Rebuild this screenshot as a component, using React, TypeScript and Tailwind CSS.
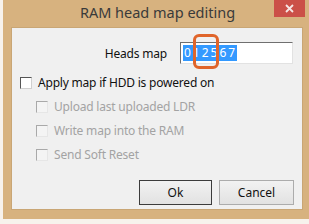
import React from "react";

const font = { fontFamily: '"Noto Sans", "Liberation Sans", sans-serif' };

function Check({ disabled, label }: { disabled?: boolean; label: string }) {
  return (
    <div className="flex items-center h-[12px]">
      <div
        className={
          disabled
            ? "w-[12px] h-[12px] border-t border-l border-[#a9a9a9] border-b border-r border-b-[#e6e6e6] border-r-[#e6e6e6] bg-[#f4f4f4]"
            : "w-[12px] h-[12px] border-t border-l border-[#555555] border-b border-r border-b-[#d0d0d0] border-r-[#d0d0d0] bg-white"
        }
      />
      <span
        className={
          "ml-[6px] text-[12px] tracking-[-0.2px] leading-none " +
          (disabled ? "text-[#a3a3a3]" : "text-[#111111]")
        }
      >
        {label}
      </span>
    </div>
  );
}

export default function App() {
  return (
    <div className="w-[309px] h-[224px] bg-[#f7f2ec] overflow-hidden relative" style={font}>
      <div className="ml-[3px] w-[309px] h-[219px] bg-[#d7b27f] flex flex-col">
        <div className="h-[27px] relative flex items-center justify-center">
          <span className="text-[14.5px] text-[#3a3a3a] leading-none -mt-[3px]">RAM head map editing</span>
          <div className="absolute left-[271px] top-0 w-[31px] h-[17px] bg-[#cb5048] flex items-center justify-center">
            <svg width="9" height="9" viewBox="0 0 9 9">
              <path d="M1 1L8 8M8 1L1 8" stroke="#f6e6e4" strokeWidth="1.8" />
            </svg>
          </div>
        </div>
        <div className="ml-[8px] w-[292px] h-[183px] border border-[#c9a675] bg-[#f0f0f0] relative">
          <div className="flex items-center mt-[14px]">
            <span className="w-[155px] text-right text-[12px] tracking-[-0.2px] text-[#111111] leading-none pt-[2px]">Heads map</span>
            <div className="ml-[13px] w-[113px] h-[22px] bg-white border-t border-l border-[#6f6f6f] border-b border-r border-b-[#e2e2e2] border-r-[#e2e2e2] flex items-center pl-[2px]">
              <span className="bg-[#3399ff] text-white text-[12px] leading-[16px] h-[16px] pl-[1px] tracking-[2px]">012567</span>
            </div>
          </div>
          <div className="mt-[13px] ml-[8px]">
            <Check label="Apply map if HDD is powered on" />
          </div>
          <div className="ml-[24px] mt-[12px] flex flex-col gap-[12px]">
            <Check disabled label="Upload last uploaded LDR" />
            <Check disabled label="Write map into the RAM" />
            <Check disabled label="Send Soft Reset" />
          </div>
          <div className="flex gap-[7px] ml-[127px] mt-[19px]">
            <button className="w-[73px] h-[25px] border border-[#3c3c3c] bg-gradient-to-b from-[#f2f2f2] to-[#e2e2e2] text-[12px] text-[#111111] leading-none">
              Ok
            </button>
            <button className="w-[75px] h-[25px] border border-[#acacac] bg-gradient-to-b from-[#f2f2f2] to-[#e2e2e2] text-[12px] text-[#111111] leading-none">
              Cancel
            </button>
          </div>
          <div className="absolute left-[181px] top-[6px] w-[26px] h-[35px] border-[3px] border-[#e0652b] rounded-[6px]" />
        </div>
      </div>
    </div>
  );
}
